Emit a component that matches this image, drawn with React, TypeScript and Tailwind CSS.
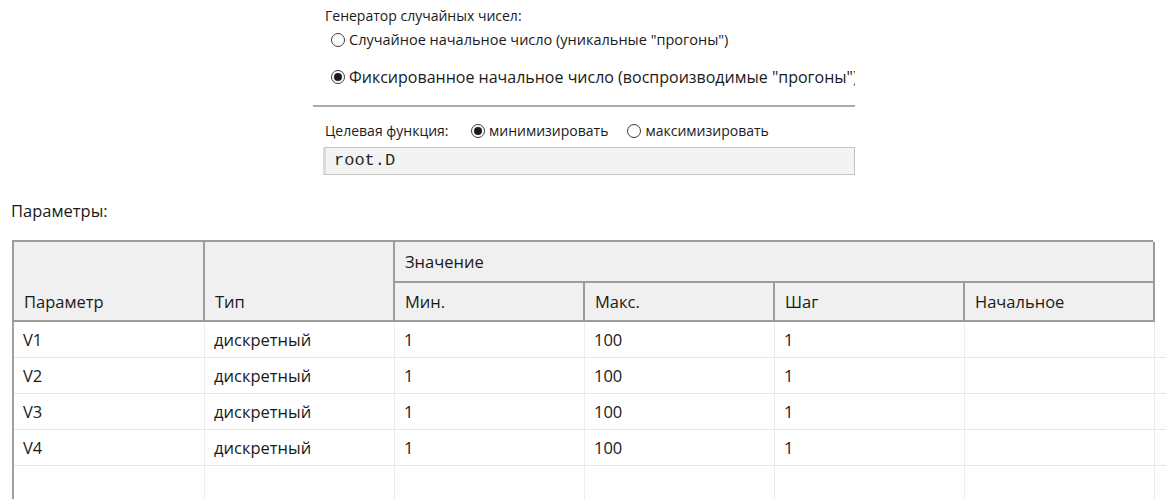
import React from "react";

const rows = [
  { name: "V1", type: "дискретный", min: "1", max: "100", step: "1", start: "" },
  { name: "V2", type: "дискретный", min: "1", max: "100", step: "1", start: "" },
  { name: "V3", type: "дискретный", min: "1", max: "100", step: "1", start: "" },
  { name: "V4", type: "дискретный", min: "1", max: "100", step: "1", start: "" },
];

const colWidths = ["w-[191px]", "w-[190px]", "w-[190px]", "w-[190px]", "w-[190px]", "w-[190px]"];

function Radio({ checked }: { checked?: boolean }) {
  return (
    <span className="inline-flex w-[14px] h-[14px] shrink-0 items-center justify-center rounded-full border border-[#3c3c3c] bg-white">
      {checked && <span className="w-[8px] h-[8px] rounded-full bg-[#1c1c1c]" />}
    </span>
  );
}

function RadioOption({ checked, label, className = "" }: { checked?: boolean; label: string; className?: string }) {
  return (
    <label className={`flex items-center gap-[4px] whitespace-nowrap ${className}`}>
      <Radio checked={checked} />
      <span>{label}</span>
    </label>
  );
}

export default function App() {
  return (
    <div
      className="w-[1166px] h-[499px] overflow-hidden bg-white text-[#1a1a1a]"
      style={{ fontFamily: '"Open Sans", "Noto Sans", sans-serif' }}
    >
      {/* Optimization settings panel */}
      <div className="ml-[313px] w-[542px] overflow-hidden text-[14px] leading-[20px]">
        <div className="pl-[12px] pt-[6px]">Генератор случайных чисел:</div>
        <div className="pl-[18px] pt-[4px] flex flex-col gap-[16px]">
          <RadioOption className="text-[14.5px]" label={'Случайное начальное число (уникальные "прогоны")'} />
          <RadioOption
            checked
            className="text-[16px] leading-[22px]"
            label={'Фиксированное начальное число (воспроизводимые "прогоны")'}
          />
        </div>
        <div className="mt-[17px] h-[2px] bg-[#ababab]" />
        <div className="pl-[12px] pt-[14px] flex items-center">
          <span className="w-[146px]">Целевая функция:</span>
          <div className="flex items-center gap-[19px]">
            <RadioOption checked label="минимизировать" />
            <RadioOption label="максимизировать" />
          </div>
        </div>
        <div className="ml-[10px] mt-[6px] h-[28px] flex items-center border border-[#c4c4c4] border-l-[3px] border-l-[#dcdcdc] bg-[#f3f3f3] pl-[8px]">
          <span className="text-[17px] text-[#2a2a2a]" style={{ fontFamily: '"Liberation Mono", monospace' }}>
            root.D
          </span>
        </div>
      </div>

      {/* Parameters table */}
      <div className="pl-[11px] pt-[25px] text-[16.5px] leading-[22px]">Параметры:</div>

      <div className="mt-[18px] ml-[12px] text-[16.5px] leading-[22px]">
        <div className="grid grid-cols-[191px_190px_190px_190px_190px_190px] grid-rows-[41px_39px] w-[1141px] bg-[#f0f0f0] border-t-2 border-l-2 border-[#9c9c9c]">
          <div className="row-span-2 flex items-end pb-[7px] pl-[10px] border-r-2 border-b-2 border-[#9c9c9c]">Параметр</div>
          <div className="row-span-2 flex items-end pb-[7px] pl-[10px] border-r-2 border-b-2 border-[#9c9c9c]">Тип</div>
          <div className="col-span-4 flex items-center pl-[10px] border-r-2 border-b-2 border-[#9c9c9c]">Значение</div>
          {["Мин.", "Макс.", "Шаг", "Начальное"].map((h) => (
            <div key={h} className="flex items-center pl-[10px] border-r-2 border-b-2 border-[#9c9c9c]">
              {h}
            </div>
          ))}
        </div>

        <div className="border-l-2 border-[#a0a0a0]">
          {rows.map((r) => (
            <div key={r.name} className="flex h-[36px] border-b border-[#e6e6e6]">
              {[r.name, r.type, r.min, r.max, r.step, r.start].map((v, i) => (
                <div
                  key={i}
                  className={`${colWidths[i]} shrink-0 flex items-center pl-[9px] border-r border-[#ececec]`}
                >
                  {v}
                </div>
              ))}
              <div className="flex-1" />
            </div>
          ))}
          <div className="flex h-[40px]">
            {colWidths.map((w, i) => (
              <div key={i} className={`${w} shrink-0 border-r border-[#ececec]`} />
            ))}
          </div>
        </div>
      </div>
    </div>
  );
}
